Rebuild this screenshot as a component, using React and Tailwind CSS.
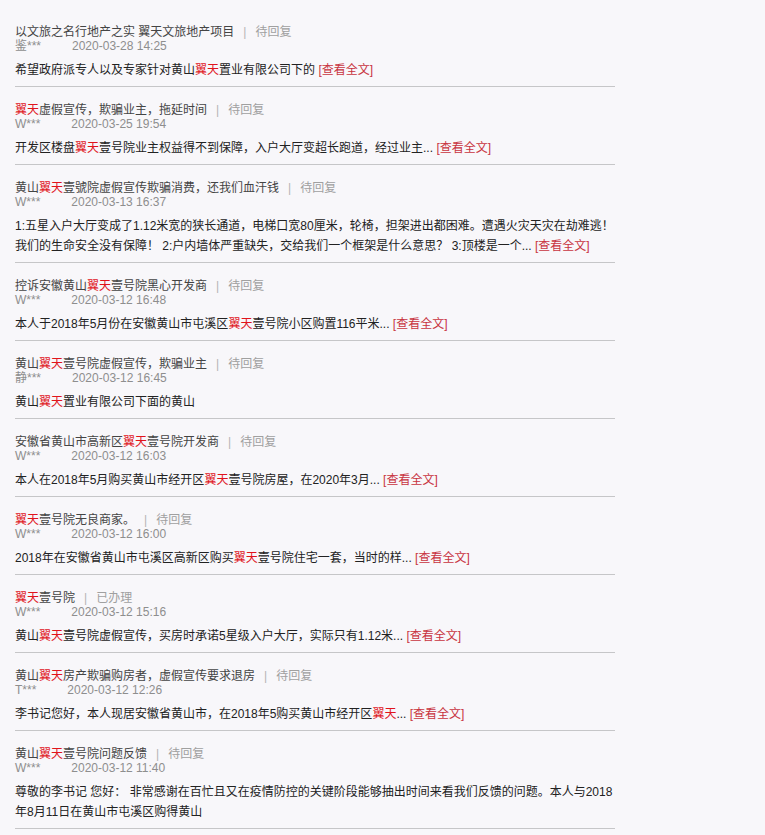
import React from "react";

const items = [
  {
    title: "以文旅之名行地产之实 翼天文旅地产项目",
    plainTitle: true,
    status: "待回复",
    user: "鉴***",
    date: "2020-03-28 14:25",
    body: "希望政府派专人以及专家针对黄山翼天置业有限公司下的",
    more: true,
  },
  {
    title: "翼天虚假宣传，欺骗业主，拖延时间",
    status: "待回复",
    user: "W***",
    date: "2020-03-25 19:54",
    body: "开发区楼盘翼天壹号院业主权益得不到保障，入户大厅变超长跑道，经过业主...",
    more: true,
  },
  {
    title: "黄山翼天壹號院虚假宣传欺骗消费，还我们血汗钱",
    status: "待回复",
    user: "W***",
    date: "2020-03-13 16:37",
    body: "1:五星入户大厅变成了1.12米宽的狭长通道，电梯口宽80厘米，轮椅，担架进出都困难。遭遇火灾天灾在劫难逃！我们的生命安全没有保障！ 2:户内墙体严重缺失，交给我们一个框架是什么意思？ 3:顶楼是一个...",
    more: true,
  },
  {
    title: "控诉安徽黄山翼天壹号院黑心开发商",
    status: "待回复",
    user: "W***",
    date: "2020-03-12 16:48",
    body: "本人于2018年5月份在安徽黄山市屯溪区翼天壹号院小区购置116平米...",
    more: true,
  },
  {
    title: "黄山翼天壹号院虚假宣传，欺骗业主",
    status: "待回复",
    user: "静***",
    date: "2020-03-12 16:45",
    body: "黄山翼天置业有限公司下面的黄山",
    more: false,
  },
  {
    title: "安徽省黄山市高新区翼天壹号院开发商",
    status: "待回复",
    user: "W***",
    date: "2020-03-12 16:03",
    body: "本人在2018年5月购买黄山市经开区翼天壹号院房屋，在2020年3月...",
    more: true,
  },
  {
    title: "翼天壹号院无良商家。",
    status: "待回复",
    user: "W***",
    date: "2020-03-12 16:00",
    body: "2018年在安徽省黄山市屯溪区高新区购买翼天壹号院住宅一套，当时的样...",
    more: true,
  },
  {
    title: "翼天壹号院",
    status: "已办理",
    user: "W***",
    date: "2020-03-12 15:16",
    body: "黄山翼天壹号院虚假宣传，买房时承诺5星级入户大厅，实际只有1.12米...",
    more: true,
  },
  {
    title: "黄山翼天房产欺骗购房者，虚假宣传要求退房",
    status: "待回复",
    user: "T***",
    date: "2020-03-12 12:26",
    body: "李书记您好，本人现居安徽省黄山市，在2018年5购买黄山市经开区翼天...",
    more: true,
  },
  {
    title: "黄山翼天壹号院问题反馈",
    status: "待回复",
    user: "W***",
    date: "2020-03-12 11:40",
    body: "尊敬的李书记 您好： 非常感谢在百忙且又在疫情防控的关键阶段能够抽出时间来看我们反馈的问题。本人与2018年8月11日在黄山市屯溪区购得黄山",
    more: false,
  },
];

// red "翼天" inside a string
const Highlight = ({ text }) => {
  const parts = text.split("翼天");
  return parts.map((p, i) => (
    <React.Fragment key={i}>
      {p}
      {i < parts.length - 1 && <span className="text-[#e0141c]">翼天</span>}
    </React.Fragment>
  ));
};

const Item = ({ item }) => (
  <div className="pt-[16px] pb-[6px] border-b border-[#c6c6c8]">
    <div className="text-[12px] leading-[14px] text-[#444] whitespace-nowrap">
      {item.plainTitle ? item.title : <Highlight text={item.title} />}
      <span className="text-[#b4b4b4] mx-[9px]">|</span>
      <span className="text-[#a0a0a0]">{item.status}</span>
    </div>
    <div className="text-[12px] leading-[14px] text-[#8e8e8e] whitespace-nowrap">
      <span className="inline-block">{item.user}</span>
      <span className="ml-[31px]">{item.date}</span>
    </div>
    <div className="mt-[7px] mr-[-4px] text-[12px] leading-[20px] text-[#222]">
      <Highlight text={item.body} />
      {item.more && <span className="text-[#c8343f]"> [查看全文]</span>}
    </div>
  </div>
);

export default function App() {
  return (
    <div
      className="min-h-screen bg-[#f8f7fa] pt-[9px]"
      style={{ fontFamily: '"Liberation Sans", "Noto Sans CJK SC", sans-serif' }}
    >
      <div className="w-[600px] ml-[15px]">
        {items.map((item, i) => (
          <Item key={i} item={item} />
        ))}
      </div>
      <div className="ml-[263px] mt-[7px] w-[60px] h-[20px] bg-white" />
    </div>
  );
}
